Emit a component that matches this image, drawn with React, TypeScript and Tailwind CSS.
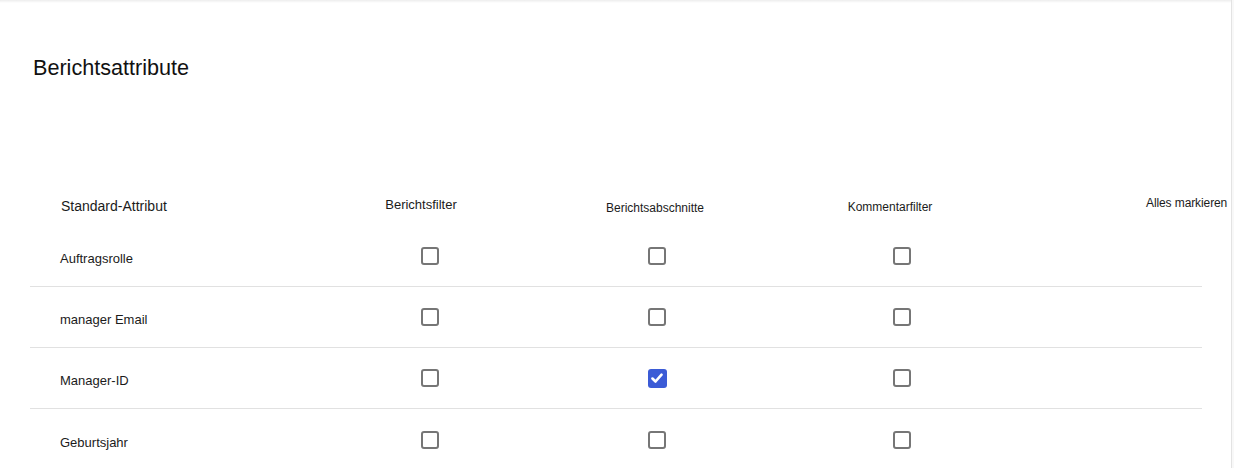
import React from "react";

const rows = [
  { label: "Auftragsrolle", checks: [false, false, false] },
  { label: "manager Email", checks: [false, false, false] },
  { label: "Manager-ID", checks: [false, true, false] },
  { label: "Geburtsjahr", checks: [false, false, false] },
];

function Box({ checked }: { checked: boolean }) {
  if (checked) {
    return (
      <div className="w-[19px] h-[19px] rounded-[3px] bg-[#3b5bd6] flex items-center justify-center">
        <svg width="14" height="14" viewBox="0 0 16 16" fill="none">
          <path d="M2.8 8.6 L6.3 12 L13.2 4.2" stroke="white" strokeWidth="3" strokeLinecap="round" strokeLinejoin="round" />
        </svg>
      </div>
    );
  }
  return <div className="w-[18px] h-[18px] rounded-[3px] border-2 border-[#767676] bg-white" />;
}

export default function App() {
  return (
    <div className="w-[1234px] h-[468px] overflow-hidden bg-[#f8f8f8] flex" style={{ fontFamily: '"Liberation Sans", Arial, sans-serif' }}>
      <div className="w-[1232px] h-full bg-white border-r border-[#e3e3e3] flex flex-col">
        <div className="h-[3px] bg-gradient-to-b from-[#ededed] to-white shrink-0" />
        <h1 className="mt-[51px] ml-[33px] text-[21.6px] leading-[28px] text-[#111]">Berichtsattribute</h1>
        <div className="mt-[103px] ml-[30px] w-[1172px] text-[#1b1b1b]">
          <div className="grid grid-cols-[300px_200px_254px_236px_1fr] h-[41px] items-center">
            <div className="pl-[31px] text-[14px] leading-[18px]">Standard-Attribut</div>
            <div className="flex justify-center pr-[18px] mb-[2px] text-[13px] leading-[16px]">Berichtsfilter</div>
            <div className="flex justify-center pr-[4px] mt-[4px] text-[12px] leading-[16px]">Berichtsabschnitte</div>
            <div className="flex justify-center pr-[24px] mt-[2px] text-[12px] leading-[16px]">Kommentarfilter</div>
            <div className="pl-[126px] mb-[6px] whitespace-nowrap text-[12px] leading-[16px] tracking-[-0.1px]">Alles markieren</div>
          </div>
          {rows.map((r, i) => (
            <div
              key={r.label}
              className={`grid grid-cols-[300px_200px_254px_236px_1fr] h-[61px] items-center ${i < rows.length - 1 ? "border-b border-[#e1e1e1]" : ""}`}
            >
              <div className="pl-[30px] mt-[6px] text-[13px] leading-[16px]">{r.label}</div>
              {r.checks.map((c, j) => (
                <div key={j} className="flex justify-center">
                  <Box checked={c} />
                </div>
              ))}
              <div />
            </div>
          ))}
        </div>
      </div>
    </div>
  );
}
